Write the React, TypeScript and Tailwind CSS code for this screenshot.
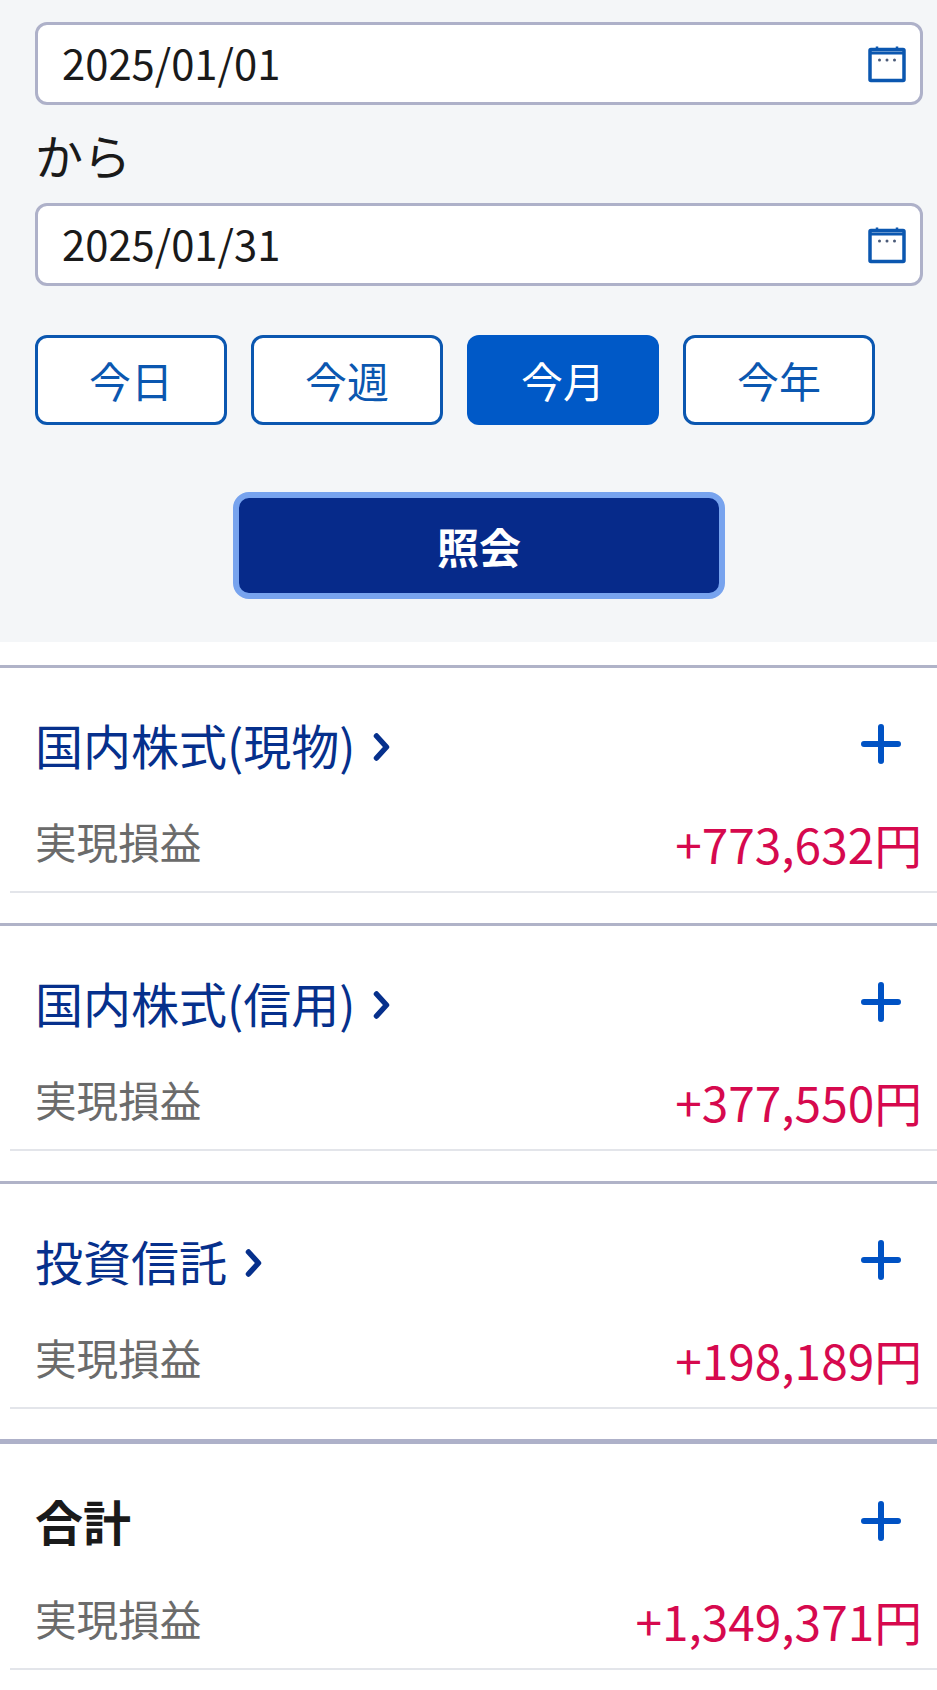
import React from 'react';

const periods = [
  { label: '今日', active: false },
  { label: '今週', active: false },
  { label: '今月', active: true },
  { label: '今年', active: false },
];

const sections = [
  { title: '国内株式(現物)', amount: '+773,632円' },
  { title: '国内株式(信用)', amount: '+377,550円' },
  { title: '投資信託', amount: '+198,189円' },
];

function CalendarIcon() {
  return (
    <svg width="38" height="38" viewBox="0 0 38 38" fill="none" className="mt-[1px] shrink-0">
      <rect x="2" y="4.5" width="34" height="31" rx="1" stroke="#0b57b0" strokeWidth="3.5" />
      <path d="M2 8h34" stroke="#0b57b0" strokeWidth="3" />
      <path d="M9 1.5v3M29 1.5v3" stroke="#0b57b0" strokeWidth="2.5" />
      <circle cx="11.5" cy="15" r="1.5" fill="#4a5a78" />
      <circle cx="19" cy="15" r="1.5" fill="#4a5a78" />
      <circle cx="26.5" cy="15" r="1.5" fill="#4a5a78" />
    </svg>
  );
}

function PlusIcon() {
  return (
    <svg width="40" height="40" viewBox="0 0 40 40" fill="none" className="mb-[2px] shrink-0">
      <path d="M20 3v34M3 20h34" stroke="#0052c4" strokeWidth="6" strokeLinecap="round" />
    </svg>
  );
}

function Chevron() {
  return (
    <svg width="18" height="30" viewBox="0 0 18 30" fill="none" className="mt-[6px] shrink-0">
      <path d="M3.5 4l10 11-10 11" stroke="#06308c" strokeWidth="5.5" strokeLinecap="round" strokeLinejoin="round" />
    </svg>
  );
}

function DateField({ value }: { value: string }) {
  return (
    <div className="flex h-[83px] items-center justify-between rounded-[12px] border-[3px] border-[#aeb1c9] bg-white pl-[24px] pr-[14px]">
      <span className="pb-[2px] text-[41.8px] leading-none text-[#1a1a1a]">{value}</span>
      <CalendarIcon />
    </div>
  );
}

function ResultRow({ amount }: { amount: string }) {
  return (
    <div className="ml-[10px] mt-[21px] flex h-[96px] items-center justify-between border-b-2 border-[#e3e5ea] pl-[25px] pr-[15px]">
      <span className="pb-[5px] text-[41.6px] leading-none text-[#6b6b6b]">実現損益</span>
      <span className="pb-[1px] text-[47.8px] leading-none text-[#d6094e]">{amount}</span>
    </div>
  );
}

export default function App() {
  return (
    <div className="min-h-[1690px] w-[937px] bg-white font-['Noto_Sans_CJK_JP','Noto_Sans',sans-serif]">
      <div className="bg-[#f4f6f8] pb-[43px] pl-[35px] pr-[14px] pt-[22px]">
        <DateField value="2025/01/01" />
        <div className="flex h-[98px] items-center text-[48px] leading-none text-[#1a1a1a]">から</div>
        <DateField value="2025/01/31" />

        <div className="mt-[49px] flex gap-[24px]">
          {periods.map((p) => (
            <button
              key={p.label}
              className={
                p.active
                  ? 'h-[90px] w-[192px] rounded-[12px] bg-[#0059c7] text-[42px] leading-none text-white'
                  : 'h-[90px] w-[192px] rounded-[12px] border-[3px] border-[#0b57b0] bg-white text-[42px] leading-none text-[#0b57b0]'
              }
            >
              {p.label}
            </button>
          ))}
        </div>

        <div className="mt-[67px] flex justify-center">
          <button className="h-[107px] w-[492px] rounded-[16px] border-[6px] border-[#77a3ee] bg-[#062a8a] text-[42px] font-bold leading-none text-white">
            照会
          </button>
        </div>
      </div>

      <div className="pt-[23px]">
        {sections.map((s) => (
          <section key={s.title} className="mb-[30px] border-t-[3px] border-[#b0b3c8] pt-[46px]">
            <div className="flex h-[62px] items-center justify-between pl-[35px] pr-[36px]">
              <span className="flex items-center gap-[18px] pb-[2px] text-[48px] leading-none text-[#06308c]">
                {s.title}
                <Chevron />
              </span>
              <PlusIcon />
            </div>
            <ResultRow amount={s.amount} />
          </section>
        ))}

        <section className="border-t-[5px] border-[#aeb1c9] pt-[47px]">
          <div className="flex h-[62px] items-center justify-between pl-[35px] pr-[36px]">
            <span className="pb-[4px] text-[48px] font-bold leading-none text-[#1a1a1a]">合計</span>
            <PlusIcon />
          </div>
          <ResultRow amount="+1,349,371円" />
        </section>
      </div>
    </div>
  );
}
